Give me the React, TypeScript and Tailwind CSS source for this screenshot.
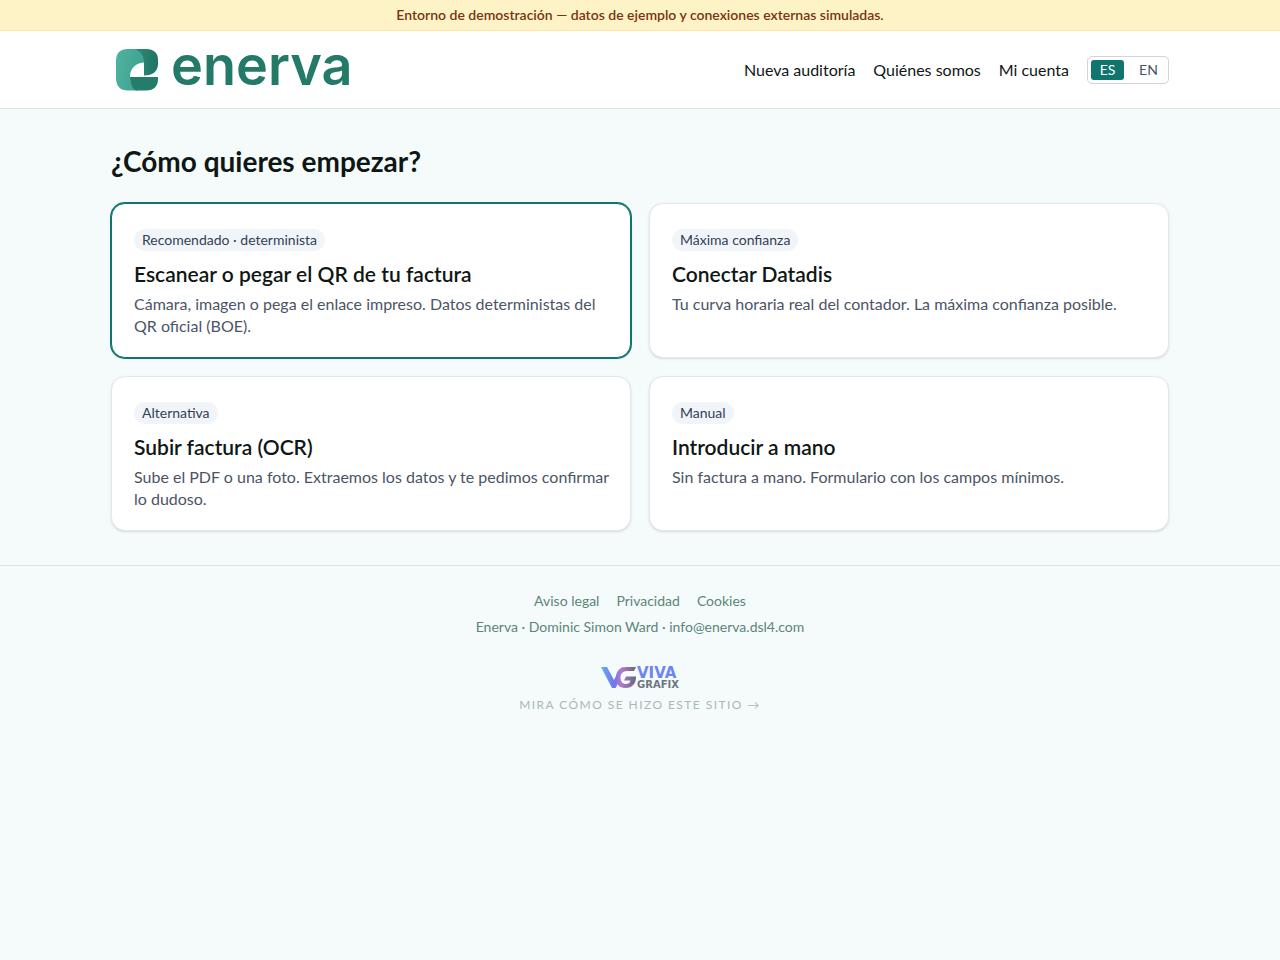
const navLinks = ["Nueva auditoría", "Quiénes somos", "Mi cuenta"];

const legalLinks = ["Aviso legal", "Privacidad", "Cookies"];

const options = [
  {
    id: "qr",
    badge: "Recomendado · determinista",
    title: "Escanear o pegar el QR de tu factura",
    text: "Cámara, imagen o pega el enlace impreso. Datos deterministas del QR oficial (BOE).",
    featured: true,
  },
  {
    id: "datadis",
    badge: "Máxima confianza",
    title: "Conectar Datadis",
    text: "Tu curva horaria real del contador. La máxima confianza posible.",
  },
  {
    id: "ocr",
    badge: "Alternativa",
    title: "Subir factura (OCR)",
    text: "Sube el PDF o una foto. Extraemos los datos y te pedimos confirmar lo dudoso.",
  },
  {
    id: "manual",
    badge: "Manual",
    title: "Introducir a mano",
    text: "Sin factura a mano. Formulario con los campos mínimos.",
  },
];

function EnervaLogo() {
  return (
    <svg width="250" height="76" viewBox="0 -14 250 76" role="img" aria-label="enerva">
      <defs>
        <linearGradient id="leaf" x1="0" y1="0" x2="1" y2="0.3">
          <stop offset="0" stopColor="#4fb3a1" />
          <stop offset="1" stopColor="#3fa28f" />
        </linearGradient>
        <linearGradient id="leafDark" x1="0" y1="0" x2="1" y2="0">
          <stop offset="0" stopColor="#2f8a78" />
          <stop offset="1" stopColor="#1f7463" />
        </linearGradient>
      </defs>
      <path
        d="M17 3H26C31 5 34 9 34 16.500C25 16.500 19 22 19 31C19 37 22 42 27 44.500H17C9 44.500 5 40 5 32V15C5 7 9 3 17 3Z"
        fill="url(#leaf)"
      />
      <path
        d="M24 3H35C43 3 47 7 47 14V18C47 25 42 29.500 33 29.500V16.500C33 9 29 5 24 3Z"
        fill="url(#leafDark)"
      />
      <path d="M19 31H47V33C47 40 43 44.500 35 44.500H25C21 42 19 37 19 31Z" fill="#247d6b" />
      <text
        x="60"
        y="39"
        fontSize="54"
        fontWeight="600"
        fill="#247a68"
        className="font-[Inter,sans-serif]"
      >
        enerva
      </text>
    </svg>
  );
}

function VivaGrafixLogo() {
  return (
    <svg width="80" height="28" viewBox="0 -2 80 28" role="img" aria-label="Viva Grafix" className="opacity-80">
      <defs>
        <linearGradient id="vg" x1="0" y1="0" x2="36" y2="0" gradientUnits="userSpaceOnUse">
          <stop offset="0" stopColor="#38a3f5" />
          <stop offset="0.4" stopColor="#4f55ee" />
          <stop offset="0.58" stopColor="#a35ac0" />
          <stop offset="1" stopColor="#45425f" />
        </linearGradient>
      </defs>
      <path d="M1 1H7L14 14L18 6C19 3 21 1.500 24 1C20 5 18 9 18.500 13C18.500 17 17 20 15.500 22H12Z" fill="url(#vg)" />
      <path
        d="M27 1H36L34 5H27C22.500 5 20.500 8 20.500 11.500C20.500 15.500 22.500 18 26 18C28.500 18 30 17 30.500 14.500H24L26 10.500H36C36 18 32 22 25.500 22C19 22 16 18 16 12C16 5 20 1 27 1Z"
        fill="url(#vg)"
      />
      <text x="37" y="12" fontSize="15" fontWeight="700" fill="#4b69f2" className="font-['DejaVu_Sans',sans-serif]">
        VIVA
      </text>
      <text x="37" y="22" fontSize="10" fontWeight="700" fill="#4b5563" className="font-['DejaVu_Sans',sans-serif]">
        GRAFIX
      </text>
    </svg>
  );
}

export default function App() {
  return (
    <div className="min-h-screen bg-[#f4fbfa] font-[Lato,'Noto_Sans',sans-serif] text-[#0f1715]">
      <div className="border-b border-[#fbe6a0] bg-[#fef3c7] px-4 py-1 text-center text-[14px] leading-[22px] font-semibold text-[#78350f]">
        Entorno de demostración — datos de ejemplo y conexiones externas simuladas.
      </div>

      <header className="border-b border-[#d3e7e3] bg-white px-4">
        <div className="mx-auto flex h-[77px] max-w-[1058px] items-center justify-between">
          <a href="#inicio">
            <EnervaLogo />
          </a>
          <nav className="flex items-center gap-[18px] text-[16px]">
            {navLinks.map((label) => (
              <a key={label} href="#" className="hover:underline">
                {label}
              </a>
            ))}
            <div className="flex gap-2 rounded-[5px] border border-[#d1d5db] p-[3px] text-[14px] leading-5">
              <button type="button" className="w-[33px] rounded-[3px] bg-[#0f766e] text-white">
                ES
              </button>
              <button type="button" className="w-[33px] rounded-[3px] text-[#475569]">
                EN
              </button>
            </div>
          </nav>
        </div>
      </header>

      <main className="px-4 py-[34px]">
        <div className="mx-auto max-w-[1058px]">
          <h1 className="mb-6 text-[28px] leading-9 font-bold">¿Cómo quieres empezar?</h1>

          <div className="grid gap-[18px] md:grid-cols-2">
            {options.map((option) => (
              <a
                key={option.id}
                href={`#${option.id}`}
                className={`rounded-[14px] border bg-white pt-[25px] pr-4 pb-5 pl-[22px] shadow-sm ${
                  option.featured ? "border-[#0f766e] ring-1 ring-[#0f766e]" : "border-[#e0eae9]"
                }`}
              >
                <span className="block w-fit rounded-full bg-[#f1f5f9] px-2 text-[14px] leading-[22px] text-[#334155]">
                  {option.badge}
                </span>
                <h2 className="mt-2 text-[21px] leading-[30px] font-semibold">{option.title}</h2>
                <p className="mt-1 text-[16px] leading-[22px] text-[#4b5566]">{option.text}</p>
              </a>
            ))}
          </div>
        </div>
      </main>

      <footer className="flex flex-col items-center border-t border-[#d3e7e3] px-4 pt-6 text-[14px] leading-[22px] text-[#5c857b]">
        <div className="flex gap-[17px]">
          {legalLinks.map((label) => (
            <a key={label} href="#" className="hover:underline">
              {label}
            </a>
          ))}
        </div>
        <p className="mt-1">Enerva · Dominic Simon Ward · info@enerva.dsl4.com</p>
        <a href="#vivagrafix" className="mt-[26px] flex flex-col items-center">
          <VivaGrafixLogo />
          <span className="mt-0.5 text-[12px] tracking-[0.12em] text-[#abb8b5] uppercase">
            Mira cómo se hizo este sitio →
          </span>
        </a>
      </footer>
    </div>
  );
}
